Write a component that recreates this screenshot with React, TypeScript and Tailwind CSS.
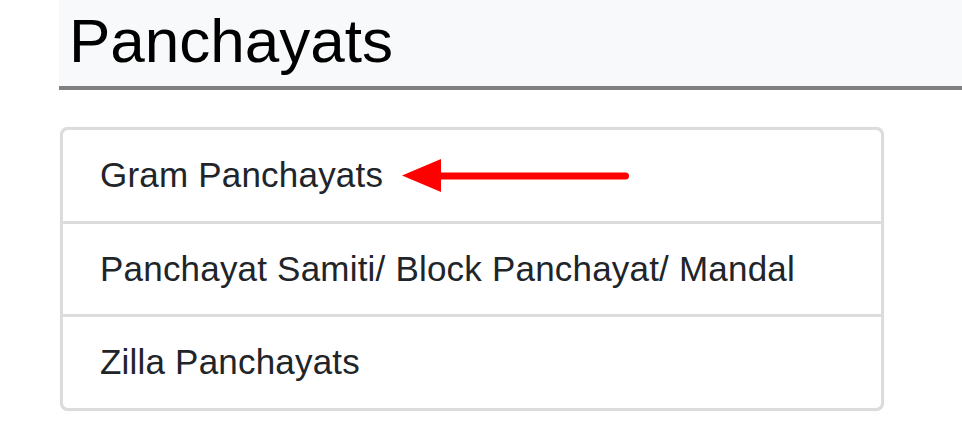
const items = [
  { label: 'Gram Panchayats', h: 'h-[91px]' },
  { label: 'Panchayat Samiti/ Block Panchayat/ Mandal', h: 'h-[93px] border-t-[3px] border-[#dcdcdc]' },
  { label: 'Zilla Panchayats', h: 'h-[94px] border-t-[3px] border-[#dcdcdc]' },
];

function Arrow() {
  return (
    <svg width="230" height="34" viewBox="0 0 230 34" className="ml-[19px] shrink-0">
      <polygon points="0,16.5 39,0 39,33" fill="#ff0000" />
      <line x1="36" y1="17" x2="223.5" y2="17" stroke="#ff0000" strokeWidth="7" strokeLinecap="round" />
    </svg>
  );
}

export default function App() {
  return (
    <div className="w-[962px] h-[438px] bg-white overflow-hidden font-['Liberation_Sans',Arial,sans-serif]">
      <div className="ml-[59px] h-[90px] bg-[#f8f9fa] border-b-[4px] border-[#808080] pl-[10px] pt-[10px]">
        <h1 className="text-[62px] leading-[62px] text-black">Panchayats</h1>
      </div>

      <div className="ml-[60px] mt-[37px] w-[824px] border-[3px] border-[#dcdcdc] rounded-[8px] shadow-[0_0_1px_rgba(0,0,0,0.15)] bg-white">
        {items.map((item, i) => (
          <div
            key={item.label}
            className={`${item.h} flex items-center pl-[37px] text-[35px] tracking-[0.2px] text-[#212529]`}
          >
            <span>{item.label}</span>
            {i === 0 && <Arrow />}
          </div>
        ))}
      </div>
    </div>
  );
}
